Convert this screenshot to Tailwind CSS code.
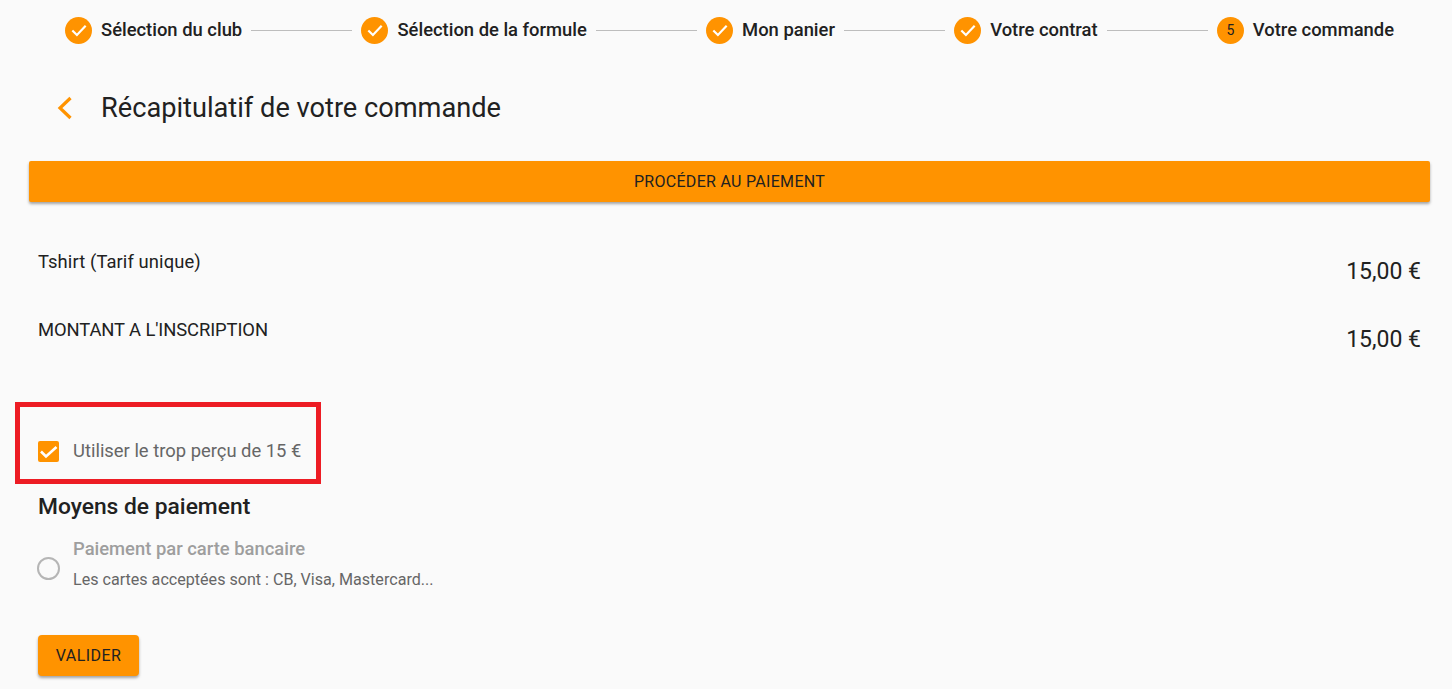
<!DOCTYPE html>
<html lang="fr">
<head>
  <meta charset="UTF-8">
  <title>Récapitulatif de votre commande</title>
  <script src="https://cdn.jsdelivr.net/npm/@tailwindcss/browser@4"></script>
</head>
<body class="relative h-[689px] overflow-hidden bg-[#fafafa] font-['Roboto',sans-serif] text-[#212121]">

  <!-- stepper -->
  <div class="flex h-[60px] items-center pl-[65px] pr-[58px] text-[18.4px] font-medium">
    <div class="flex size-[27px] shrink-0 items-center justify-center rounded-full bg-[#ff9300]">
      <svg class="size-[20px]" viewBox="0 0 24 24" fill="none" stroke="#fff" stroke-width="2.6"><path d="M4 12.5l5.5 5.5L20 7"/></svg>
    </div>
    <span class="ml-[9px] whitespace-nowrap">Sélection du club</span>
    <div class="mx-[9px] h-px flex-1 bg-[#bdbdbd]"></div>
    <div class="flex size-[27px] shrink-0 items-center justify-center rounded-full bg-[#ff9300]">
      <svg class="size-[20px]" viewBox="0 0 24 24" fill="none" stroke="#fff" stroke-width="2.6"><path d="M4 12.5l5.5 5.5L20 7"/></svg>
    </div>
    <span class="ml-[9px] whitespace-nowrap">Sélection de la formule</span>
    <div class="mx-[9px] h-px flex-1 bg-[#bdbdbd]"></div>
    <div class="flex size-[27px] shrink-0 items-center justify-center rounded-full bg-[#ff9300]">
      <svg class="size-[20px]" viewBox="0 0 24 24" fill="none" stroke="#fff" stroke-width="2.6"><path d="M4 12.5l5.5 5.5L20 7"/></svg>
    </div>
    <span class="ml-[9px] whitespace-nowrap">Mon panier</span>
    <div class="mx-[9px] h-px flex-1 bg-[#bdbdbd]"></div>
    <div class="flex size-[27px] shrink-0 items-center justify-center rounded-full bg-[#ff9300]">
      <svg class="size-[20px]" viewBox="0 0 24 24" fill="none" stroke="#fff" stroke-width="2.6"><path d="M4 12.5l5.5 5.5L20 7"/></svg>
    </div>
    <span class="ml-[9px] whitespace-nowrap">Votre contrat</span>
    <div class="mx-[9px] h-px flex-1 bg-[#bdbdbd]"></div>
    <div class="flex size-[27px] shrink-0 items-center justify-center rounded-full bg-[#ff9300] text-sm font-normal">5</div>
    <span class="ml-[9px] whitespace-nowrap">Votre commande</span>
  </div>

  <!-- title -->
  <div class="mt-[16px] flex h-[64px] items-center pl-[57px]">
    <svg class="h-[24px] w-[16px]" viewBox="0 0 16 24" fill="none" stroke="#ff9300" stroke-width="3.2"><path d="M13.5 2L3 12 13.5 22"/></svg>
    <h1 class="ml-[28px] text-[27.2px]">Récapitulatif de votre commande</h1>
  </div>

  <!-- pay button -->
  <div class="mx-[29px] mt-[21px] flex h-[41px] w-[1401px] items-center justify-center rounded-[2px] bg-[#ff9300] text-base uppercase tracking-[0.3px] shadow-[0_2px_3px_rgba(0,0,0,0.35)]">Procéder au paiement</div>

  <!-- lines -->
  <div class="mt-[48px] flex h-[68px] justify-between pl-[38px] pr-[31px]">
    <span class="text-[18.4px] leading-[24px] tracking-[0.1px]">Tshirt (Tarif unique)</span>
    <span class="mt-[9px] text-[23px] leading-[26px]">15,00 €</span>
  </div>
  <div class="flex h-[68px] justify-between pl-[38px] pr-[31px]">
    <span class="text-[18.4px] leading-[24px] tracking-[-0.1px]">MONTANT A L'INSCRIPTION</span>
    <span class="mt-[9px] text-[23px] leading-[26px]">15,00 €</span>
  </div>

  <!-- trop percu -->
  <div class="mt-[45px] flex h-[40px] items-center pl-[38px]">
    <div class="flex size-[21px] items-center justify-center rounded-[2px] bg-[#ff9300]">
      <svg class="size-[21px]" viewBox="0 0 21 21" fill="none" stroke="#fff" stroke-width="2.6"><path d="M3 10.5l5 5L18.5 6"/></svg>
    </div>
    <span class="ml-[14px] text-[18.4px] text-[#666666]">Utiliser le trop perçu de 15 €</span>
  </div>

  <!-- payment -->
  <h2 class="ml-[38px] mt-[21px] text-[22.8px] font-medium leading-[30px]">Moyens de paiement</h2>
  <div class="mt-[17px] flex items-center pl-[37px]">
    <div class="mt-[8px] size-[23px] rounded-full border-[2px] border-[#b5b5b5]"></div>
    <div class="ml-[13px]">
      <div class="text-[18.4px] font-medium leading-[20px] text-[#9e9e9e]">Paiement par carte bancaire</div>
      <div class="mt-[11px] text-[16.1px] leading-[20px] text-[#666666]">Les cartes acceptées sont : CB, Visa, Mastercard...</div>
    </div>
  </div>
  <button class="ml-[38px] mt-[45px] h-[41px] w-[101px] rounded-[4px] bg-[#ff9300] text-center text-base uppercase tracking-[0.45px] shadow-[0_2px_3px_rgba(0,0,0,0.35)]">Valider</button>

  <!-- annotation -->
  <div class="absolute left-[15px] top-[402px] h-[82px] w-[306px] border-[5px] border-[#ed1c24]"></div>
</body>
</html>
